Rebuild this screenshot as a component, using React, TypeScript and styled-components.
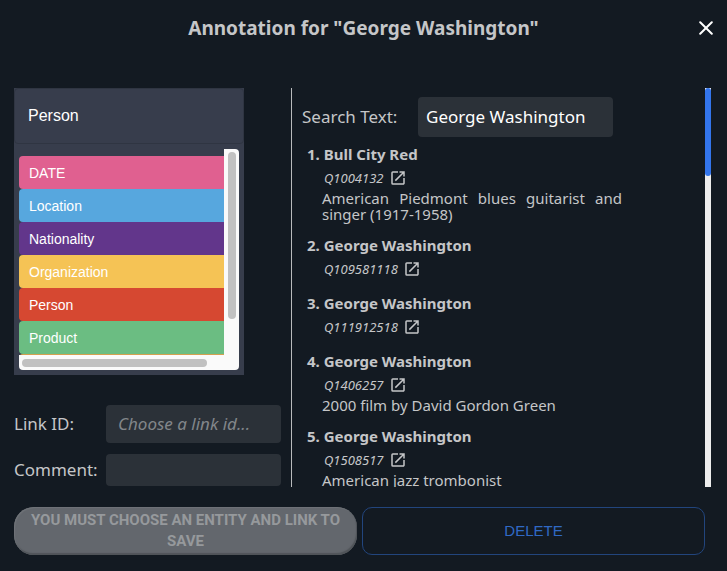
import React, { useState } from "react";
import styled, { createGlobalStyle } from "styled-components";
import { MdOpenInNew } from "react-icons/md";

const GlobalStyle = createGlobalStyle`
  *, *::before, *::after { box-sizing: border-box; }
  body {
    margin: 0;
    background: #131a22;
    color: #c5c6c8;
    font-family: "Noto Sans", sans-serif;
    font-size: 17px;
  }
  button, input, select { font: inherit; color: inherit; }
`;

const Dialog = styled.main`
  display: flex;
  flex-direction: column;
  height: 100vh;
  padding: 0 16px 16px 14px;
`;

const Header = styled.header`
  display: grid;
  grid-template-columns: 24px 1fr 24px;
  align-items: center;
  height: 56px;
  margin: 0 -2px 32px 0;
  flex: none;
`;

const Title = styled.h1`
  grid-column: 2;
  margin: 0;
  text-align: center;
  font-size: 19px;
  line-height: 24px;
  font-weight: 700;
`;

const CloseButton = styled.button`
  display: flex;
  justify-content: flex-end;
  padding: 0;
  border: 0;
  background: none;
  color: #fff;
  cursor: pointer;
`;

const Body = styled.div`
  display: grid;
  grid-template-columns: 277fr 420fr;
  flex: 1;
  min-height: 0;
`;

const FormPane = styled.section`
  display: flex;
  flex-direction: column;
  padding-right: 10px;
  min-height: 0;
`;

const EntityPicker = styled.div`
  display: flex;
  flex-direction: column;
  margin: 0 37px 30px 0;
  background: #373d4c;
`;

const EntitySelect = styled.select`
  appearance: none;
  height: 56px;
  padding: 0 13px 2px;
  border: 1px solid #2f3542;
  border-radius: 4px;
  background: #373d4c;
  color: #fff;
  font-family: "Liberation Sans", sans-serif;
  font-size: 16px;
`;

const Menu = styled.div`
  display: grid;
  grid-template-columns: 1fr 15px;
  margin: 5px 5px 5px;
  border-radius: 4px;
  overflow: hidden;
`;

const Options = styled.ul`
  height: 206px;
  margin: 0;
  padding: 7px 0 0;
  list-style: none;
  overflow: hidden;
`;

const Option = styled.button<{ $color: string }>`
  display: block;
  width: 100%;
  height: 33px;
  padding: 0 10px;
  border: 0;
  border-radius: 4px 0 0 4px;
  background: ${(p) => p.$color};
  color: #fff;
  font-family: "Liberation Sans", sans-serif;
  font-size: 14px;
  text-align: left;
  cursor: pointer;
`;

const VerticalTrack = styled.div`
  padding: 3px 3px 0 4px;
  background: #fafafa;
`;

const HorizontalTrack = styled.div`
  grid-column: 1 / -1;
  height: 15px;
  padding: 4px 32px 3px 3px;
  background: #fafafa;
`;

const Thumb = styled.div<{ $length: string }>`
  height: ${(p) => p.$length};
  border-radius: 4px;
  background: #c1c1c1;
`;

const Field = styled.div<{ $tall?: boolean }>`
  display: grid;
  grid-template-columns: auto 175px;
  justify-content: space-between;
  align-items: center;
  height: ${(p) => (p.$tall ? "38px" : "32px")};
  margin-bottom: ${(p) => (p.$tall ? "11px" : "0")};
`;

const FieldLabel = styled.label`
  font-size: 17px;
  line-height: 24px;
  white-space: nowrap;
`;

const TextInput = styled.input`
  width: 100%;
  min-width: 0;
  height: 100%;
  padding: 0 12px 2px;
  border: 0;
  border-radius: 4px;
  background: #2b3138;
  color: #fff;
  font-size: 17px;

  &::placeholder {
    color: #82868a;
    font-style: italic;
    opacity: 1;
  }
`;

const SearchPane = styled.section`
  display: grid;
  grid-template-columns: 1fr 6px;
  min-height: 0;
  border-left: 1px solid #b9bbbd;
`;

const SearchContent = styled.div`
  min-height: 0;
  padding: 9px 83px 0 10px;
  overflow: hidden;
`;

const SearchRow = styled.div`
  display: grid;
  grid-template-columns: 116px 195px;
  align-items: center;
  height: 40px;
  margin-bottom: 5px;
`;

const SearchInput = styled(TextInput)`
  padding: 0 8px 2px;
`;

const Results = styled.ol`
  margin: 0;
  padding: 0 0 0 5px;
  list-style: none;
`;

const Result = styled.li`
  margin-bottom: 10px;
`;

const ResultTitle = styled.h2`
  margin: 0;
  font-size: 15px;
  line-height: 24px;
  font-weight: 700;
`;

const ResultLink = styled.a`
  display: flex;
  align-items: center;
  gap: 5px;
  height: 24px;
  padding-left: 17px;
  color: inherit;
  font-size: 13px;
  font-style: italic;
  text-decoration: none;
`;

const Description = styled.p`
  margin: 0 0 11px;
  padding-left: 15px;
  font-size: 15px;
  line-height: 16px;
  text-align: justify;
`;

const PageTrack = styled.div`
  background: #ededed;
`;

const PageThumb = styled.div`
  height: 22%;
  border-radius: 3px;
  background: #3375ec;
`;

const Footer = styled.footer`
  display: grid;
  grid-template-columns: 1fr 1fr;
  gap: 5px;
  flex: none;
  height: 48px;
  margin: 20px 6px 0 0;
`;

const SaveButton = styled.button`
  padding: 0 12px;
  border: 0;
  border-radius: 20px;
  background: #63676d;
  box-shadow: inset 1px 1px 1px #6f7378, inset -1px -2px 1px #505459;
  color: #96999c;
  font-family: Roboto, sans-serif;
  font-size: 15px;
  font-weight: 700;
  line-height: 21px;
`;

const DeleteButton = styled.button`
  padding: 0 0 2px;
  border: 1px solid #22457d;
  border-radius: 10px;
  background: transparent;
  color: #3069c5;
  font-family: "Liberation Sans", sans-serif;
  font-size: 15px;
  cursor: pointer;
`;

const entities = [
  { name: "DATE", color: "#e06090" },
  { name: "Location", color: "#57a7de" },
  { name: "Nationality", color: "#62368b" },
  { name: "Organization", color: "#f5c355" },
  { name: "Person", color: "#d64831" },
  { name: "Product", color: "#6bbd82" },
  { name: "Work", color: "#d5a04f" },
];

const results = [
  { name: "Bull City Red", id: "Q1004132", text: "American Piedmont blues guitarist and singer (1917-1958)" },
  { name: "George Washington", id: "Q109581118" },
  { name: "George Washington", id: "Q111912518" },
  { name: "George Washington", id: "Q1406257", text: "2000 film by David Gordon Green" },
  { name: "George Washington", id: "Q1508517", text: "American jazz trombonist" },
];

export default function App() {
  const [entity, setEntity] = useState("Person");
  const [query, setQuery] = useState("George Washington");

  return (
    <Dialog>
      <GlobalStyle />
      <Header>
        <Title>Annotation for "George Washington"</Title>
        <CloseButton aria-label="Close">
          <svg width="14" height="14" viewBox="0 0 14 14" fill="none" stroke="currentColor" strokeWidth="2" strokeLinecap="round">
            <path d="M1.2 1.2 12.8 12.8M12.8 1.2 1.2 12.8" />
          </svg>
        </CloseButton>
      </Header>

      <Body>
        <FormPane>
          <EntityPicker>
            <EntitySelect aria-label="Entity" value={entity} onChange={(e) => setEntity(e.target.value)}>
              {entities.map((e) => (
                <option key={e.name}>{e.name}</option>
              ))}
            </EntitySelect>
            <Menu>
              <Options>
                {entities.slice(0, 6).map((e) => (
                  <li key={e.name}>
                    <Option $color={e.color} onClick={() => setEntity(e.name)}>
                      {e.name}
                    </Option>
                  </li>
                ))}
                <li>
                  <Option $color={entities[6].color} aria-label={entities[6].name} onClick={() => setEntity(entities[6].name)} />
                </li>
              </Options>
              <VerticalTrack>
                <Thumb $length="167px" />
              </VerticalTrack>
              <HorizontalTrack>
                <Thumb $length="8px" />
              </HorizontalTrack>
            </Menu>
          </EntityPicker>
          <Field $tall>
            <FieldLabel htmlFor="link">Link ID:</FieldLabel>
            <TextInput id="link" placeholder="Choose a link id..." />
          </Field>
          <Field>
            <FieldLabel htmlFor="comment">Comment:</FieldLabel>
            <TextInput id="comment" />
          </Field>
        </FormPane>

        <SearchPane>
          <SearchContent>
            <SearchRow>
              <FieldLabel htmlFor="search">Search Text:</FieldLabel>
              <SearchInput id="search" value={query} onChange={(e) => setQuery(e.target.value)} />
            </SearchRow>
            <Results>
              {results.map((r, i) => (
                <Result key={r.id}>
                  <ResultTitle>{`${i + 1}. ${r.name}`}</ResultTitle>
                  <ResultLink href={`#${r.id}`}>
                    {r.id}
                    <MdOpenInNew size={18} />
                  </ResultLink>
                  {r.text && <Description>{r.text}</Description>}
                </Result>
              ))}
            </Results>
          </SearchContent>
          <PageTrack>
            <PageThumb />
          </PageTrack>
        </SearchPane>
      </Body>

      <Footer>
        <SaveButton disabled>YOU MUST CHOOSE AN ENTITY AND LINK TO SAVE</SaveButton>
        <DeleteButton>DELETE</DeleteButton>
      </Footer>
    </Dialog>
  );
}
